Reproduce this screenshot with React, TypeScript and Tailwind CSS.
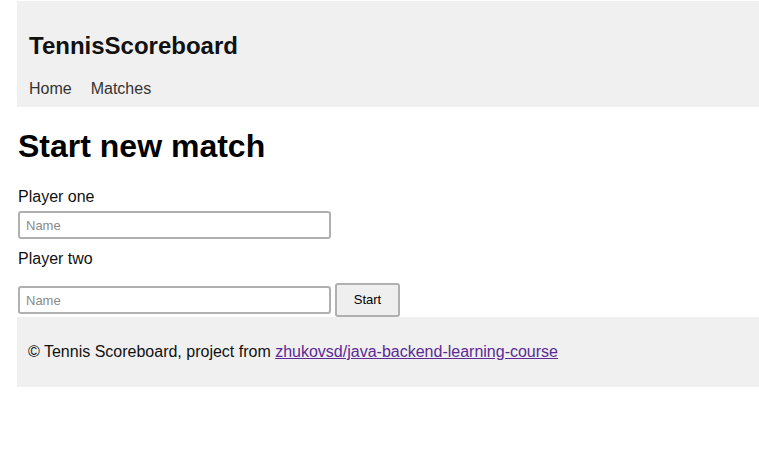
export default function App() {
  return (
    <div className="font-['Liberation_Sans',Arial,sans-serif] text-black bg-white min-h-[454px]">
      <header className="ml-[17px] mt-[1px] h-[106px] bg-[#f0f0f0] pl-[12px] pt-[31px]">
        <div className="text-[24px] font-bold leading-[28px] text-[#111]">TennisScoreboard</div>
        <nav className="mt-[19px] flex gap-[19px] text-[16px] leading-[20px] text-[#333]">
          <span>Home</span>
          <span>Matches</span>
        </nav>
      </header>
      <main className="pl-[18px]">
        <h1 className="mt-[21px] text-[32px] font-bold leading-[36px]">Start new match</h1>
        <div className="mt-[24px] text-[16px] leading-[18px] text-[#111]">Player one</div>
        <input
          placeholder="Name"
          className="mt-[5px] block w-[313px] h-[28px] border-2 border-[#b0b0b0] rounded-[3px] px-[6px] text-[13px] placeholder:text-[#8a8a8a] outline-none"
        />
        <div className="mt-[11px] text-[16px] leading-[18px] text-[#111]">Player two</div>
        <div className="mt-[15px] flex items-center gap-[4px]">
          <input
            placeholder="Name"
            className="block w-[313px] h-[28px] border-2 border-[#b0b0b0] rounded-[3px] px-[6px] text-[13px] placeholder:text-[#8a8a8a] outline-none"
          />
          <button className="w-[65px] h-[34px] bg-[#efefef] border-2 border-[#b0b0b0] rounded-[3px] text-[13px] text-black">
            Start
          </button>
        </div>
      </main>
      <footer className="ml-[17px] h-[70px] bg-[#f0f0f0] pl-[11px] flex items-center text-[16px] text-[#111]">
        <span>
          © Tennis Scoreboard, project from{" "}
          <a href="#" className="text-[#5b2a95] underline">zhukovsd/java-backend-learning-course</a>
        </span>
      </footer>
    </div>
  );
}
